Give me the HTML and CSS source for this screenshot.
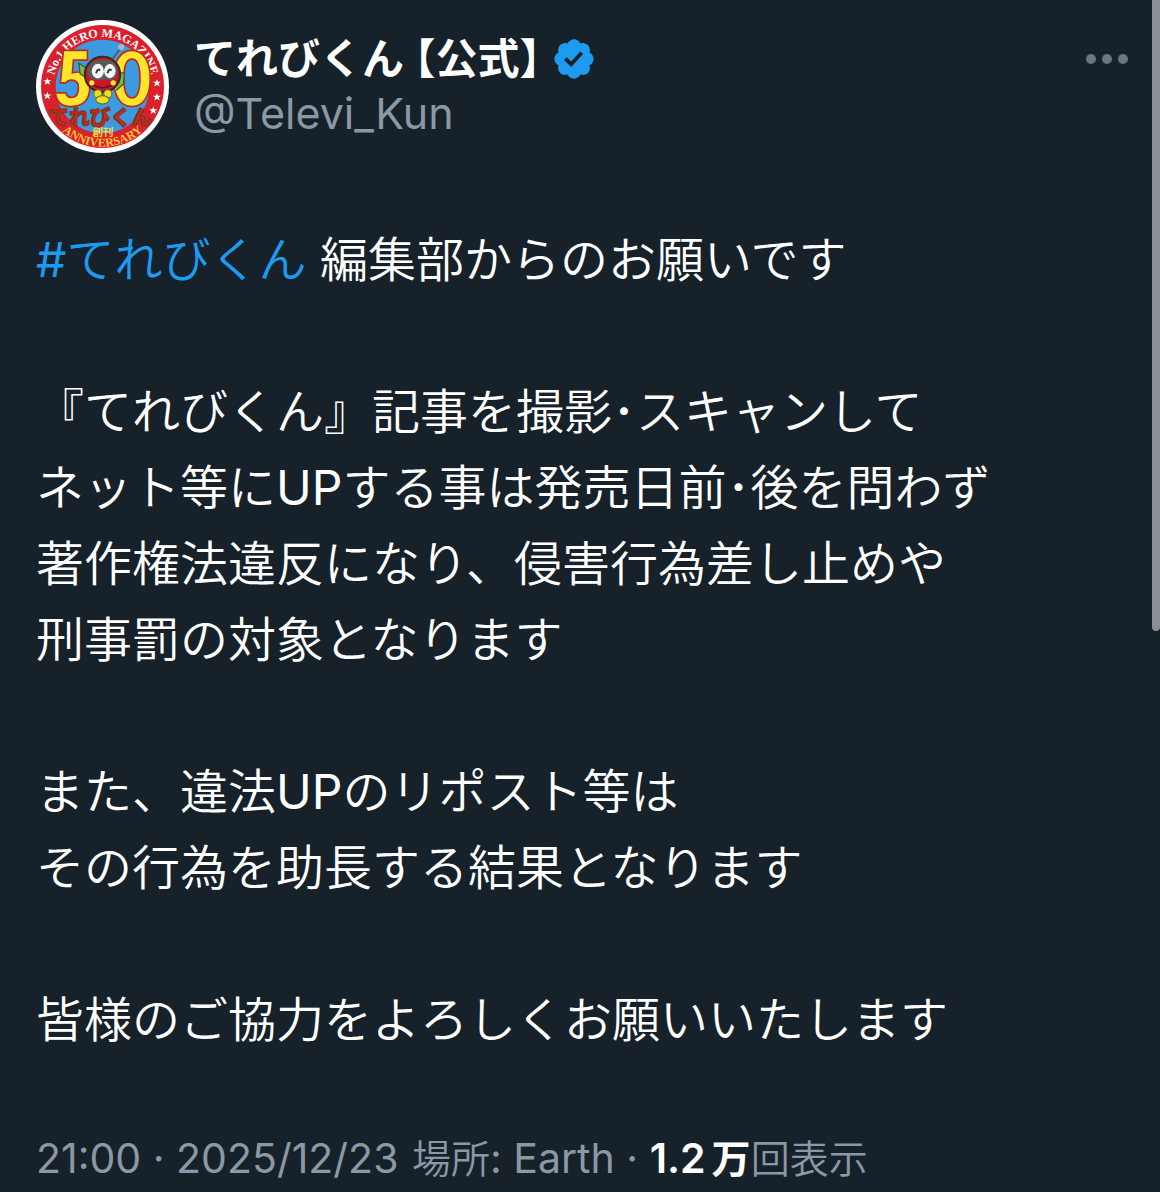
FILE: index.html
```html
<!DOCTYPE html>
<html lang="ja">
<head>
<meta charset="utf-8">
<meta name="viewport" content="width=device-width, initial-scale=1">
<title>てれびくん【公式】</title>
<link rel="stylesheet" href="styles.css">
</head>
<body>
<article class="post">
  <header class="post-header">
    <svg class="avatar" viewBox="18 17 398 398" role="img" aria-label="てれびくん 50th anniversary">
      <defs>
        <path id="arc-top" d="M74 254a148 148 0 1 1 286 0"/>
        <path id="arc-bottom" d="M37 216a180 180 0 0 0 360 0"/>
        <clipPath id="disc"><circle cx="217" cy="216" r="140"/></clipPath>
      </defs>
      <circle cx="217" cy="216" r="199" fill="#fff"/>
      <circle cx="217" cy="216" r="184" fill="#d9202c"/>
      <circle cx="217" cy="216" r="140" fill="#3c9be0"/>
      <text class="logo-ring"><textPath href="#arc-top" startOffset="50%">No.1 HERO MAGAZINE</textPath></text>
      <text class="logo-ring logo-ring-gold"><textPath href="#arc-bottom" startOffset="50%">ANNIVERSARY</textPath></text>
      <g fill="#fff">
        <path id="star" d="M52 189l3 8h9l-7 5 3 9-8-5-8 5 3-9-7-5h9z"/>
        <use href="#star" y="43"/>
        <use href="#star" x="328" y="5"/>
        <use href="#star" x="328" y="47"/>
        <use href="#star" x="317" y="87"/>
      </g>
      <g class="logo-outline">
        <path d="M100 108h72v29h-42l-3 38q52-13 52 42 0 59-57 59-41 0-46-41h31q5 14 18 14 20 0 20-29 0-23-20-23-12 0-17 8H91z"/>
        <path fill-rule="evenodd" d="M305 108c-36 0-55 35-55 84s19 84 55 84 55-35 55-84-19-84-55-84zm0 26c16 0 24 23 24 58s-8 58-24 58-24-23-24-58 8-58 24-58z"/>
      </g>
      <circle cx="273" cy="98" r="9" fill="#a9bac7"/>
      <path d="M268 106l-20 26" stroke="#555" stroke-width="5"/>
      <path d="M166 160l-20-14 4 32 22 14M262 178l20-4-2 34-22 20" fill="#83b944" stroke="#3f6120" stroke-width="4"/>
      <circle cx="217" cy="180" r="53" fill="#c9162b" stroke="#3d291a" stroke-width="6"/>
      <path d="M172 166q6-30 46-30t44 30q0 30-24 30h-42q-24 0-24-30z" fill="#555d5a"/>
      <ellipse cx="203" cy="170" rx="18" ry="22" fill="#f7faf8"/>
      <ellipse cx="239" cy="170" rx="17" ry="21" fill="#f7faf8"/>
      <path d="M198 176q4-16 12-8M232 176q4-16 12-8" fill="none" stroke="#36413f" stroke-width="6"/>
      <path d="M182 206q34 28 70 0" fill="none" stroke="#671420" stroke-width="5"/>
      <circle cx="185" cy="205" r="8" fill="#ffe53c"/><circle cx="249" cy="205" r="8" fill="#ffe53c"/>
      <g fill="#f5dc20" stroke="#58722a" stroke-width="3"><circle cx="203" cy="238" r="12"/><circle cx="233" cy="238" r="12"/><ellipse cx="217" cy="256" rx="20" ry="12"/></g>
      <text class="logo-name" x="210" y="332">てれびくん</text>
      <text class="logo-small" x="218" y="364">創刊</text>
    </svg>
    <div class="identity">
      <h1 class="name"><span>てれびくん 【公式】</span>
        <svg class="badge" viewBox="0 0 22 22" role="img" aria-label="認証済み"><path fill="#1d9bf0" fill-rule="evenodd" d="M20.396 11c-.018-.646-.215-1.275-.57-1.816-.354-.54-.852-.972-1.438-1.246.223-.607.27-1.264.14-1.897-.131-.634-.437-1.218-.882-1.687-.47-.445-1.053-.75-1.687-.882-.633-.13-1.290-.083-1.897.14-.273-.587-.704-1.086-1.245-1.440S11.647 1.620 11 1.604c-.646.017-1.273.213-1.813.568s-.969.854-1.240 1.440c-.608-.223-1.267-.272-1.902-.14-.635.130-1.220.436-1.690.882-.445.470-.749 1.055-.878 1.688-.130.633-.080 1.290.144 1.896-.587.274-1.087.705-1.443 1.245-.356.540-.555 1.170-.574 1.817.020.647.218 1.276.574 1.817.356.540.856.972 1.443 1.245-.224.606-.274 1.263-.144 1.896.130.634.433 1.218.877 1.688.470.443 1.054.747 1.687.878.633.132 1.290.084 1.897-.136.274.586.705 1.084 1.246 1.439.540.354 1.170.551 1.816.569.647-.016 1.276-.213 1.817-.567s.972-.854 1.245-1.440c.604.239 1.266.296 1.903.164.636-.132 1.220-.447 1.680-.907.460-.460.776-1.044.908-1.681s.075-1.299-.165-1.903c.586-.274 1.084-.705 1.439-1.246.354-.540.551-1.170.569-1.816zM9.662 14.850l-3.429-3.428 1.293-1.302 2.072 2.072 4.400-4.794 1.347 1.246z"/></svg>
      </h1>
      <a class="handle" href="#profile">@Televi_Kun</a>
    </div>
    <button class="more" type="button" aria-label="もっと見る"><i></i><i></i><i></i></button>
  </header>

  <p class="body"><a class="tag" href="#tag"><span class="latin">#</span>てれびくん</a> 編集部からのお願いです

『てれびくん』記事を撮影･スキャンして
ネット等に<span class="latin">UP</span>する事は発売日前･後を問わず
著作権法違反になり、侵害行為差し止めや
刑事罰の対象となります

また、違法<span class="latin">UP</span>のリポスト等は
その行為を助長する結果となります

皆様のご協力をよろしくお願いいたします</p>

  <footer class="meta"><time datetime="2025-12-23T21:00">21:00 · 2025/12/23</time> <span class="place"><span class="kanji">場所</span>: Earth</span> · <strong>1.2<span class="kanji unit">万</span></strong><span class="kanji">回表示</span></footer>
</article>
<div class="scrollbar" aria-hidden="true"></div>
</body>
</html>
```
FILE: styles.css
```css
* { box-sizing: border-box; }

body {
  margin: 0;
  background: #17212a;
  color: #fff;
  font-family: Inter, "Noto Sans CJK JP", sans-serif;
}

a { text-decoration: none; }

.post { padding: 20px 32px 0 36px; }

.post-header {
  display: flex;
  align-items: flex-start;
}

.avatar {
  width: 133px;
  height: 133px;
  flex: none;
}

.logo-ring {
  font: bold 36px "Liberation Serif", serif;
  fill: #fff;
  text-anchor: middle;
}

.logo-ring-gold { fill: #ffc83a; }

.logo-outline path {
  fill: #ffe52e;
  stroke: #bd2b1c;
  stroke-width: 5px;
}

.logo-name {
  font: 900 62px "Noto Sans CJK JP", sans-serif;
  fill: #d3221f;
  stroke: #7d3a1c;
  stroke-width: 4px;
  text-anchor: middle;
}

.logo-small {
  font: bold 32px "Noto Sans CJK JP", sans-serif;
  fill: #ffd83a;
  text-anchor: middle;
}

.identity {
  flex: 1;
  padding: 12px 0 0 25px;
}

.name {
  display: flex;
  align-items: center;
  gap: 10px;
  margin: 0;
  font-size: 42px;
  line-height: 54px;
  font-weight: 600;
}

.name span { font-feature-settings: "halt"; }

.badge {
  width: 46px;
  height: 46px;
}

.handle {
  display: block;
  color: #8b98a5;
  font-size: 43px;
  line-height: 54px;
}

.more {
  display: flex;
  gap: 6px;
  padding: 34px 0 10px;
  border: 0;
  background: none;
}

.more i {
  width: 10px;
  height: 10px;
  border-radius: 50%;
  background: #6a7883;
}

.body {
  margin: 69px 0 0;
  font-size: 48px;
  line-height: 76px;
  font-weight: 350;
  white-space: pre-wrap;
}

.latin { font-weight: 400; }

.tag { color: #1d9bf0; }

.meta {
  margin-top: 70px;
  padding-bottom: 4px;
  color: #8b98a5;
  font-size: 41px;
  line-height: 60px;
}

.place { margin-left: 2px; }

.kanji {
  font-size: 39px;
  font-weight: 350;
}

.meta strong {
  color: #fff;
  font-weight: 600;
}

.meta .unit {
  margin-left: 6px;
  font-weight: 600;
}

.scrollbar {
  position: absolute;
  top: 0;
  right: 0;
  width: 8px;
  height: 631px;
  border-radius: 0 0 4px 4px;
  background: #8a8f96;
}
```
